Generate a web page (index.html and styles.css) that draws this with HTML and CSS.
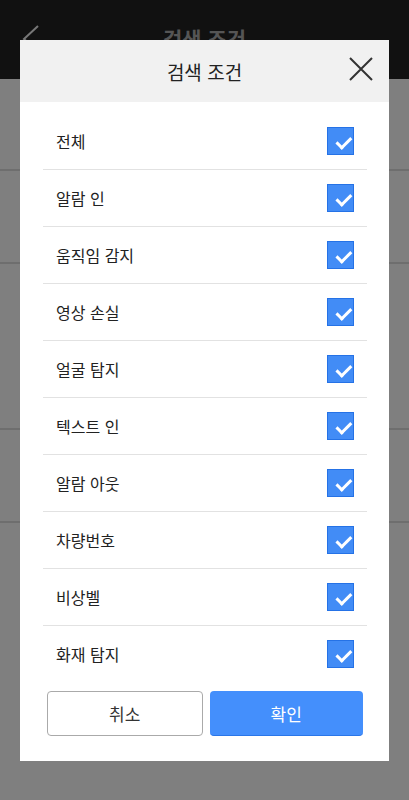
FILE: index.html
```html
<!DOCTYPE html>
<html lang="ko">
<head>
  <meta charset="UTF-8">
  <meta name="viewport" content="width=device-width, initial-scale=1.0">
  <title>검색 조건</title>
  <link rel="stylesheet" href="styles.css">
</head>
<body>

  <!-- page under the dialog -->
  <div class="page">
    <div class="topbar">
      <svg class="back" width="20" height="30" viewBox="0 0 20 30">
        <path d="M18 2 L4 15 L18 28" fill="none" stroke="#eee" stroke-width="2"/>
      </svg>
      <span class="topbar-title">검색 조건</span>
    </div>
    <div class="page-list">
      <div class="page-row r1"></div>
      <div class="page-row r2"></div>
      <div class="page-row r3"></div>
      <div class="page-row r4"></div>
    </div>
  </div>

  <div class="overlay">
    <div class="modal">
      <div class="modal-head">
        <span class="modal-title">검색 조건</span>
        <button class="close" aria-label="닫기">
          <svg width="24" height="24" viewBox="0 0 24 24">
            <path d="M1 1 L23 23 M23 1 L1 23" stroke="#333" stroke-width="2" fill="none"/>
          </svg>
        </button>
      </div>

      <ul class="options">
        <li class="option"><span>전체</span><i class="check"></i></li>
        <li class="option"><span>알람 인</span><i class="check"></i></li>
        <li class="option"><span>움직임 감지</span><i class="check"></i></li>
        <li class="option"><span>영상 손실</span><i class="check"></i></li>
        <li class="option"><span>얼굴 탐지</span><i class="check"></i></li>
        <li class="option"><span>텍스트 인</span><i class="check"></i></li>
        <li class="option"><span>알람 아웃</span><i class="check"></i></li>
        <li class="option"><span>차량번호</span><i class="check"></i></li>
        <li class="option"><span>비상벨</span><i class="check"></i></li>
        <li class="option"><span>화재 탐지</span><i class="check"></i></li>
      </ul>

      <div class="modal-foot">
        <button class="btn btn-cancel">취소</button>
        <button class="btn btn-ok">확인</button>
      </div>
    </div>
  </div>

</body>
</html>
```

FILE: styles.css
```css
* {
  box-sizing: border-box;
}

body {
  margin: 0;
  font-family: "Noto Sans CJK KR", "Noto Sans", sans-serif;
  background: #fff;
  height: 800px;
  overflow: hidden;
}

/* page behind */
.topbar {
  height: 79px;
  background: #222;
  display: flex;
  align-items: center;
  justify-content: center;
  position: relative;
}

.back {
  position: absolute;
  left: 20px;
  top: 24px;
}

.topbar-title {
  color: #aaa;
  font-size: 21px;
  font-weight: 700;
  margin-top: -4px;
}

.page-row {
  border-bottom: 2px solid #ddd;
}
.r1 { height: 92px; }
.r2 { height: 93px; }
.r3 { height: 166px; }
.r4 { height: 93px; }

.overlay {
  position: fixed;
  inset: 0;
  background: rgba(0, 0, 0, 0.5);
  padding: 40px 20px 0 20px;
}

/* dialog */
.modal {
  width: 369px;
  background: #fff;
  padding-bottom: 25px;
}

.modal-head {
  height: 62px;
  background: #f1f1f1;
  display: flex;
  align-items: center;
  justify-content: center;
  position: relative;
}

.modal-title {
  font-size: 19px;
  color: #222;
}

.close {
  position: absolute;
  right: 16px;
  top: 17px;
  width: 24px;
  height: 24px;
  padding: 0;
  border: none;
  background: none;
}

.options {
  list-style: none;
  margin: 0;
  padding: 11px 22px 0 23px;
}

.option {
  height: 57px;
  display: flex;
  align-items: center;
  justify-content: space-between;
  padding: 0 13px 0 13px;
  border-bottom: 1px solid #e2e2e2;
  font-size: 16px;
  color: #222;
}

.option:last-child {
  border-bottom: none;
  height: 56px;
}

.check {
  width: 27px;
  height: 28px;
  background: #428cf6;
  border: 1px solid #2572e6;
  position: relative;
}

.check::after {
  content: "";
  position: absolute;
  left: 7px;
  top: 6px;
  width: 12px;
  height: 6px;
  border-left: 3px solid #fff;
  border-bottom: 3px solid #fff;
  transform: rotate(-45deg) translate(-1px, 3px);
}

.modal-foot {
  display: flex;
  gap: 7px;
  padding: 9px 26px 0 27px;
}

.btn {
  flex: 1;
  height: 45px;
  border-radius: 4px;
  font-family: inherit;
  font-size: 17px;
  cursor: pointer;
}

.btn-cancel {
  background: #fff;
  border: 1px solid #aaa;
  color: #333;
}

.btn-ok {
  background: #448ffc;
  border: none;
  border-bottom: 1px solid #2a76e8;
  color: #fff;
}
```
